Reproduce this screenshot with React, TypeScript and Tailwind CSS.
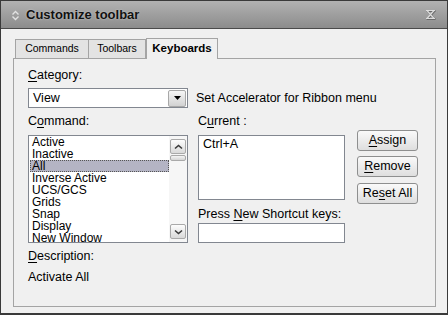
import React from 'react';

const items = ['Active', 'Inactive', 'All', 'Inverse Active', 'UCS/GCS', 'Grids', 'Snap', 'Display', 'New Window'];

const Btn: React.FC<{ children: React.ReactNode; className?: string }> = ({ children, className = '' }) => (
  <div
    className={`h-[21px] w-[61px] flex items-center justify-center rounded-[3px] border border-[#8e8f8f] bg-gradient-to-b from-[#fafafa] to-[#dedede] text-[12.5px] ${className}`}
  >
    {children}
  </div>
);

const ScrollArrow: React.FC<{ down?: boolean }> = ({ down }) => (
  <div className="h-[15px] w-[16px] flex items-center justify-center rounded-[2px] border border-[#a9a9a9] bg-gradient-to-b from-[#fdfdfd] to-[#d9d9d9]">
    <svg width="9" height="6" viewBox="0 0 9 6">
      <path
        d={down ? 'M1 1.5 L4.5 4.5 L8 1.5' : 'M1 4.5 L4.5 1.5 L8 4.5'}
        stroke="#3a3a3a"
        strokeWidth="1.6"
        fill="none"
      />
    </svg>
  </div>
);

export default function App() {
  return (
    <div className="w-[448px] h-[315px] border border-[#3a3a3a] border-b-2 bg-[#f0f0f0] flex flex-col font-['Liberation_Sans',Arial,sans-serif] text-black">
      {/* title bar */}
      <div className="h-[28px] shrink-0 flex items-center border-b border-[#4a4a4a] bg-gradient-to-b from-[#b2b2b2] to-[#8c8c8c] pl-[10px] pr-[11px]">
        <svg width="9" height="11" viewBox="0 0 9 11" className="mt-[1px]">
          <path d="M1.5 4.5 L4.5 1.5 L7.5 4.5 M1.5 6.5 L4.5 9.5 L7.5 6.5" stroke="#e2e2e2" strokeWidth="1.4" fill="none" />
        </svg>
        <span className="ml-[6px] text-[13px] font-bold text-[#111] [text-shadow:0_0_2px_rgba(255,255,255,0.5)]">Customize toolbar</span>
        <div className="flex-1" />
        <svg width="11" height="11" viewBox="0 0 11 11">
          <path d="M1 1.5 H10 M1 9.5 H10 M2 1.5 L9 9.5 M9 1.5 L2 9.5" stroke="#6a6a6a" strokeWidth="1.6" fill="none" transform="translate(0.6 0.6)" />
          <path d="M1 1.5 H10 M1 9.5 H10 M2 1.5 L9 9.5 M9 1.5 L2 9.5" stroke="#dcdcdc" strokeWidth="1.2" fill="none" />
        </svg>
      </div>

      {/* body */}
      <div className="flex-1 pt-[8px] pl-[12px] pr-[11px]">
        {/* tabs */}
        <div className="flex items-end pl-[2px] h-[21px] relative z-10">
          <div className="h-[19px] w-[74px] flex items-center justify-center border border-b-0 border-[#a4a4a4] bg-[#e3e3e3] text-[10.5px]">
            Commands
          </div>
          <div className="h-[19px] w-[57px] flex items-center justify-center border border-b-0 border-l-0 border-[#a4a4a4] bg-[#e3e3e3] text-[10.5px]">
            Toolbars
          </div>
          <div className="h-[21px] w-[72px] -mb-px pb-px flex items-center justify-center border border-b-0 border-[#a4a4a4] bg-[#f0f0f0] text-[11.5px] font-bold">
            Keyboards
          </div>
        </div>

        {/* panel */}
        <div className="h-[249px] border border-[#a4a4a4] pl-[14px] pt-[8px] text-[12.5px]">
          <div className="h-[16px] leading-[16px]">
            <u className="underline-offset-2">C</u>ategory:
          </div>

          <div className="mt-[5px] flex items-center">
            <div className="h-[20px] w-[160px] border border-[#828790] bg-white flex items-center">
              <span className="pl-[4px] flex-1">View</span>
              <div className="h-[17px] w-[18px] mr-[1px] rounded-[2px] border border-[#a8a8a8] bg-gradient-to-b from-[#f6f6f6] to-[#d2d2d2] flex items-center justify-center">
                <svg width="7" height="4" viewBox="0 0 7 4">
                  <path d="M0 0 H7 L3.5 4 Z" fill="#000" />
                </svg>
              </div>
            </div>
            <span className="ml-[8px]">Set Accelerator for Ribbon menu</span>
          </div>

          <div className="mt-[5px] flex">
            {/* commands */}
            <div className="w-[160px]">
              <div className="h-[16px] leading-[16px]">
                C<u className="underline-offset-2">o</u>mmand:
              </div>
              <div className="mt-[6px] h-[108px] border border-[#828790] bg-white flex">
                <div className="flex-1 pl-[1px] overflow-hidden text-[12px]">
                  {items.map((it) => (
                    <div
                      key={it}
                      className={`h-[12px] leading-[12px] pl-[2px] whitespace-nowrap ${
                        it === 'All' ? 'bg-[#b4b4c4] outline outline-1 outline-dotted outline-[#555] -outline-offset-1' : ''
                      }`}
                    >
                      {it}
                    </div>
                  ))}
                </div>
                <div className="w-[18px] flex flex-col items-center py-[3px] bg-[#f6f6f6]">
                  <ScrollArrow />
                  <div className="mt-px h-[6px] w-[16px] rounded-[2px] border border-[#a9a9a9] bg-gradient-to-b from-[#f4f4f4] to-[#d4d4d4]" />
                  <div className="flex-1" />
                  <ScrollArrow down />
                </div>
              </div>
            </div>

            {/* current */}
            <div className="ml-[10px] w-[147px]">
              <div className="h-[16px] leading-[16px]">
                C<u className="underline-offset-2">u</u>rrent :
              </div>
              <div className="mt-[6px] h-[65px] border border-[#828790] bg-white pl-[4px] pt-[1px] leading-[14px]">Ctrl+A</div>
              <div className="mt-[6px] h-[16px] leading-[16px]">
                Press <u className="underline-offset-2">N</u>ew Shortcut keys:
              </div>
              <div className="mt-px h-[20px] border border-[#828790] bg-white" />
            </div>

            {/* buttons */}
            <div className="ml-[12px] pt-[17px] flex flex-col">
              <Btn>
                <u className="underline-offset-2">A</u>ssign
              </Btn>
              <Btn className="mt-[5px]">
                <u className="underline-offset-2">R</u>emove
              </Btn>
              <Btn className="mt-[6px]">
                Re<u className="underline-offset-2">s</u>et All
              </Btn>
            </div>
          </div>

          <div className="mt-[5px] h-[16px] leading-[16px]">
            <u className="underline-offset-2">D</u>escription:
          </div>
          <div className="mt-[5px] h-[16px] leading-[16px]">Activate All</div>
        </div>
      </div>
    </div>
  );
}
